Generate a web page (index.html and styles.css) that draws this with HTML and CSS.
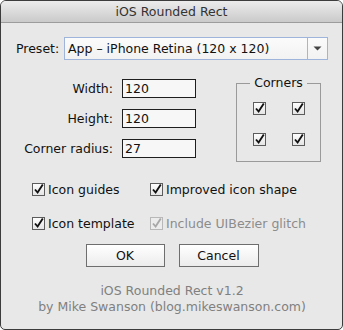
FILE: index.html
```html
<!DOCTYPE html>
<html>
<head>
<meta charset="utf-8">
<link rel="stylesheet" href="styles.css">
</head>
<body>
<div class="window">
  <div class="titlebar">iOS Rounded Rect</div>
  <div class="content">
    <div class="preset-row">
      <span class="label">Preset:</span>
      <div class="select">
        <span class="select-text">App – iPhone Retina (120 x 120)</span>
        <span class="select-btn"><svg width="9" height="5" viewBox="0 0 9 5"><path d="M0.5 0.5 L8.5 0.5 L4.5 4.5 Z" fill="#444"/></svg></span>
      </div>
    </div>
    <div class="middle">
      <div class="fields">
        <label class="flabel">Width:</label><div class="input">120</div>
        <label class="flabel">Height:</label><div class="input">120</div>
        <label class="flabel">Corner radius:</label><div class="input">27</div>
      </div>
      <fieldset class="corners">
        <legend>Corners</legend>
        <div class="corner-grid">
          <span class="cb"><svg width="14" height="14" viewBox="0 0 14 14"><rect x="0.5" y="1.5" width="12" height="12" fill="url(#g)" stroke="#5c5c5c"/><path d="M3 7.5 L5.6 10.5 L10.8 2.5" fill="none" stroke="#111" stroke-width="1.9"/></svg></span>
          <span class="cb"><svg width="14" height="14" viewBox="0 0 14 14"><rect x="0.5" y="1.5" width="12" height="12" fill="url(#g)" stroke="#5c5c5c"/><path d="M3 7.5 L5.6 10.5 L10.8 2.5" fill="none" stroke="#111" stroke-width="1.9"/></svg></span>
          <span class="cb"><svg width="14" height="14" viewBox="0 0 14 14"><rect x="0.5" y="1.5" width="12" height="12" fill="url(#g)" stroke="#5c5c5c"/><path d="M3 7.5 L5.6 10.5 L10.8 2.5" fill="none" stroke="#111" stroke-width="1.9"/></svg></span>
          <span class="cb"><svg width="14" height="14" viewBox="0 0 14 14"><rect x="0.5" y="1.5" width="12" height="12" fill="url(#g)" stroke="#5c5c5c"/><path d="M3 7.5 L5.6 10.5 L10.8 2.5" fill="none" stroke="#111" stroke-width="1.9"/></svg></span>
        </div>
      </fieldset>
    </div>
    <div class="options">
      <div class="opt"><span class="cb"><svg width="14" height="14" viewBox="0 0 14 14"><defs><linearGradient id="g" x1="0" y1="0" x2="0" y2="1"><stop offset="0" stop-color="#ffffff"/><stop offset="1" stop-color="#e4e4e4"/></linearGradient></defs><rect x="0.5" y="1.5" width="12" height="12" fill="url(#g)" stroke="#5c5c5c"/><path d="M3 7.5 L5.6 10.5 L10.8 2.5" fill="none" stroke="#111" stroke-width="1.9"/></svg></span><span>Icon guides</span></div>
      <div class="opt"><span class="cb"><svg width="14" height="14" viewBox="0 0 14 14"><rect x="0.5" y="1.5" width="12" height="12" fill="url(#g)" stroke="#5c5c5c"/><path d="M3 7.5 L5.6 10.5 L10.8 2.5" fill="none" stroke="#111" stroke-width="1.9"/></svg></span><span>Improved icon shape</span></div>
      <div class="opt"><span class="cb"><svg width="14" height="14" viewBox="0 0 14 14"><rect x="0.5" y="1.5" width="12" height="12" fill="url(#g)" stroke="#5c5c5c"/><path d="M3 7.5 L5.6 10.5 L10.8 2.5" fill="none" stroke="#111" stroke-width="1.9"/></svg></span><span>Icon template</span></div>
      <div class="opt disabled"><span class="cb"><svg width="14" height="14" viewBox="0 0 14 14"><rect x="0.5" y="1.5" width="12" height="12" fill="#ececec" stroke="#b8b8b8"/><path d="M3 7.5 L5.6 10.5 L10.8 2.5" fill="none" stroke="#a8a8a8" stroke-width="1.9"/></svg></span><span>Include UIBezier glitch</span></div>
    </div>
    <div class="buttons">
      <div class="btn ok">OK</div>
      <div class="btn cancel">Cancel</div>
    </div>
    <div class="footer">
      <div>iOS Rounded Rect v1.2</div>
      <div>by Mike Swanson (blog.mikeswanson.com)</div>
    </div>
  </div>
</div>
</body>
</html>
```

FILE: styles.css
```css
* { box-sizing: border-box; }
html, body { margin: 0; padding: 0; background: #ffffff; }
body {
  font-family: "DejaVu Sans", "Liberation Sans", sans-serif;
  font-size: 12.5px;
  color: #111;
}
.window {
  width: 343px;
  height: 330px;
  border: 1px solid #3c3c3c;
  border-radius: 6px 6px 5px 5px;
  overflow: hidden;
  background: #e8e8e8;
  display: flex;
  flex-direction: column;
}
.titlebar {
  height: 22px;
  flex: none;
  background: linear-gradient(#ececec, #cacaca);
  border-bottom: 1px solid #9c9c9c;
  text-align: center;
  line-height: 22px;
  font-size: 12.5px;
  color: #333;
}
.content {
  padding: 14px 14px 0 15px;
  display: flex;
  flex-direction: column;
}
.preset-row {
  display: flex;
  align-items: center;
  height: 23px;
}
.preset-row .label { width: 48px; }
.select {
  width: 264px;
  height: 23px;
  border: 1px solid #9eb4da;
  background: linear-gradient(#fbfbfb, #f2f2f2);
  display: flex;
  align-items: center;
}
.select-text { flex: 1; padding-left: 3px; font-size: 12.5px; }
.select-btn {
  width: 20px;
  height: 21px;
  border-left: 1px solid #b4b4b4;
  display: flex;
  align-items: center;
  justify-content: center;
}
.middle {
  display: flex;
  margin-top: 16px;
}
.fields {
  display: grid;
  grid-template-columns: 97px 74px;
  column-gap: 9px;
  row-gap: 11px;
  padding-top: 3px;
  align-content: start;
}
.flabel {
  text-align: right;
  height: 19px;
  line-height: 19px;
}
.input {
  height: 19px;
  border: 1px solid #1e1e1e;
  background: #f7f7f7;
  line-height: 17px;
  padding-left: 2px;
}
.corners {
  margin: 0 0 0 40px;
  padding: 0;
  width: 85px;
  height: 86px;
  border: 1px solid #9a9a9a;
  border-top-color: #9a9a9a;
}
.corners legend {
  margin: 0 auto;
  padding: 0 4px;
  line-height: 14px;
}
.corner-grid {
  display: grid;
  grid-template-columns: 13px 13px;
  column-gap: 26px;
  row-gap: 17px;
  padding: 11px 0 0 16px;
}
.cb { display: inline-flex; width: 14px; height: 14px; }
.cb svg { display: block; }
.options {
  display: grid;
  grid-template-columns: 118px auto;
  row-gap: 20px;
  margin-top: 20px;
  padding-left: 16px;
}
.opt {
  display: flex;
  align-items: center;
  gap: 2px;
  height: 14px;
}
.opt.disabled { color: #8c8c8c; }
.buttons {
  display: flex;
  justify-content: center;
  gap: 14px;
  margin-top: 14px;
  padding-right: 0;
}
.btn {
  height: 23px;
  border: 1px solid #6e6e6e;
  background: linear-gradient(#ffffff, #ececec);
  text-align: center;
  line-height: 21px;
}
.btn.ok { width: 79px; }
.btn.cancel { width: 80px; }
.footer {
  margin-top: 16px;
  text-align: center;
  color: #808080;
  line-height: 16px;
}
```
